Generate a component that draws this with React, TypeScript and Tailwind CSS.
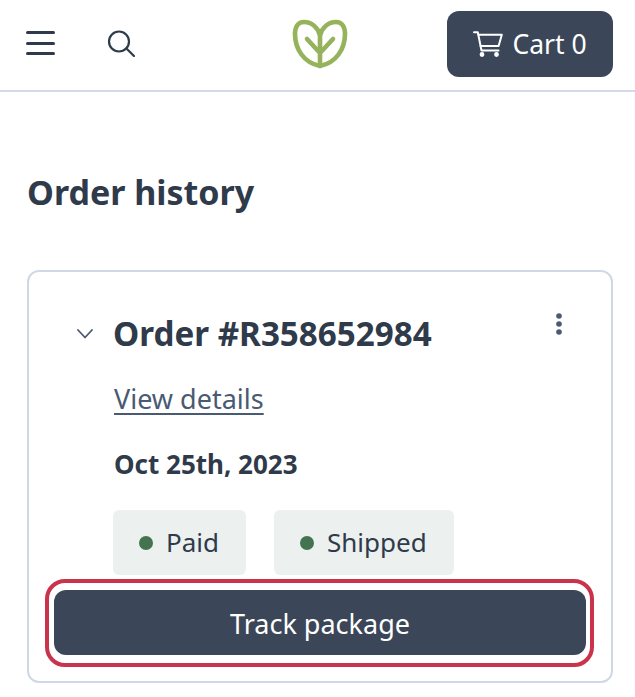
function Logo() {
  return (
    <svg width="56" height="50" viewBox="0 0 56 50" fill="none" stroke="#94b35a" strokeWidth="4.6" strokeLinecap="round" strokeLinejoin="round">
      <path d="M28 47C12 44 3 30 3 15C3 8 6 3 12 3C20 3 26 9 28 16C30 9 36 3 44 3C50 3 53 8 53 15C53 30 44 44 28 47Z" />
      <path d="M28 47V16M28 34L15 20M28 34L41 20" />
    </svg>
  );
}

function CartIcon() {
  return (
    <svg width="30" height="26" viewBox="0 0 30 26" fill="none" stroke="#fff" strokeWidth="2" strokeLinecap="round" strokeLinejoin="round">
      <path d="M1 1.2H4.8L8.5 19.5H25.5" />
      <path d="M5.5 3.8H28.8L25.6 15H7.6" />
      <circle cx="9" cy="23.5" r="1.4" fill="#fff" />
      <circle cx="23.5" cy="23.5" r="1.4" fill="#fff" />
    </svg>
  );
}

function Badge({ label }: { label: string }) {
  return (
    <span className="flex h-[65px] items-center gap-[13px] rounded-md bg-[#ecf1ef] pl-[26px] pr-[27px] text-[26px] text-[#2f3a4a]">
      <span className="h-[14px] w-[14px] rounded-full bg-[#43744f]" />
      {label}
    </span>
  );
}

export default function App() {
  return (
    <div className="h-[697px] w-[635px] overflow-hidden bg-white font-['Noto_Sans','Open_Sans',sans-serif] text-[#2f3a4a]">
      <header className="flex h-[92px] items-start border-b-2 border-[#d3dbe8] pl-[26px] pr-[22px]">
        <button className="mt-[31px] flex w-[29px] flex-col gap-[7.5px]" aria-label="Menu">
          <span className="h-[3px] rounded-full bg-[#2f3a4a]" />
          <span className="h-[3px] rounded-full bg-[#2f3a4a]" />
          <span className="h-[3px] rounded-full bg-[#2f3a4a]" />
        </button>
        <button className="ml-[52px] mt-[29px]" aria-label="Search">
          <svg width="28" height="28" viewBox="0 0 28 28" fill="none" stroke="#2f3a4a" strokeWidth="2.2" strokeLinecap="round">
            <circle cx="12" cy="12.5" r="10" />
            <path d="M19.5 19.5L27 27" />
          </svg>
        </button>
        <div className="ml-[157px] mt-[19px]">
          <Logo />
        </div>
        <button className="ml-auto mt-[11px] flex h-[66px] w-[166px] items-center justify-center gap-[9px] rounded-xl bg-[#3b4759] text-[26.5px] text-white">
          <CartIcon />
          <span className="pt-[2px]">Cart 0</span>
        </button>
      </header>

      <main className="pl-[27px] pr-[22px]">
        <h1 className="mt-[76px] text-[34px] font-bold leading-[48px]">Order history</h1>

        <section className="relative mt-[54px] h-[413px] rounded-xl border-2 border-[#d0d8e6] px-[25px] pt-[38px]">
          <div className="flex items-center">
            <svg className="ml-[23px]" width="16" height="10" viewBox="0 0 16 10" fill="none" stroke="#4a5a72" strokeWidth="1.8" strokeLinecap="round" strokeLinejoin="round">
              <path d="M1 1L8 8.5L15 1" />
            </svg>
            <h2 className="ml-[20px] text-[33.2px] font-bold leading-[48px]">Order #R358652984</h2>
          </div>
          <div className="pl-[60px]">
            <a className="mt-[23px] block text-[27px] leading-[36px] text-[#4a5a72] underline underline-offset-4">View details</a>
            <p className="mt-[29px] text-[26px] font-bold leading-[36px]">Oct 25th, 2023</p>
            <div className="-ml-px mt-[28px] flex gap-[28px]">
              <Badge label="Paid" />
              <Badge label="Shipped" />
            </div>
          </div>
          <div className="relative mt-[15px]">
            <button className="block h-[65px] w-full rounded-xl bg-[#3b4759] pt-[3px] text-[27px] text-white">
              Track package
            </button>
            <span className="absolute -bottom-[12px] -left-[9px] -right-[8px] -top-[11px] rounded-[20px] border-4 border-[#c9344c]" />
          </div>
          <svg className="absolute right-[48px] top-[40px]" width="8" height="24" viewBox="0 0 8 24" fill="#4a5a72">
            <circle cx="4" cy="4" r="2.8" />
            <circle cx="4" cy="12" r="2.8" />
            <circle cx="4" cy="20" r="2.8" />
          </svg>
        </section>
      </main>
    </div>
  );
}
